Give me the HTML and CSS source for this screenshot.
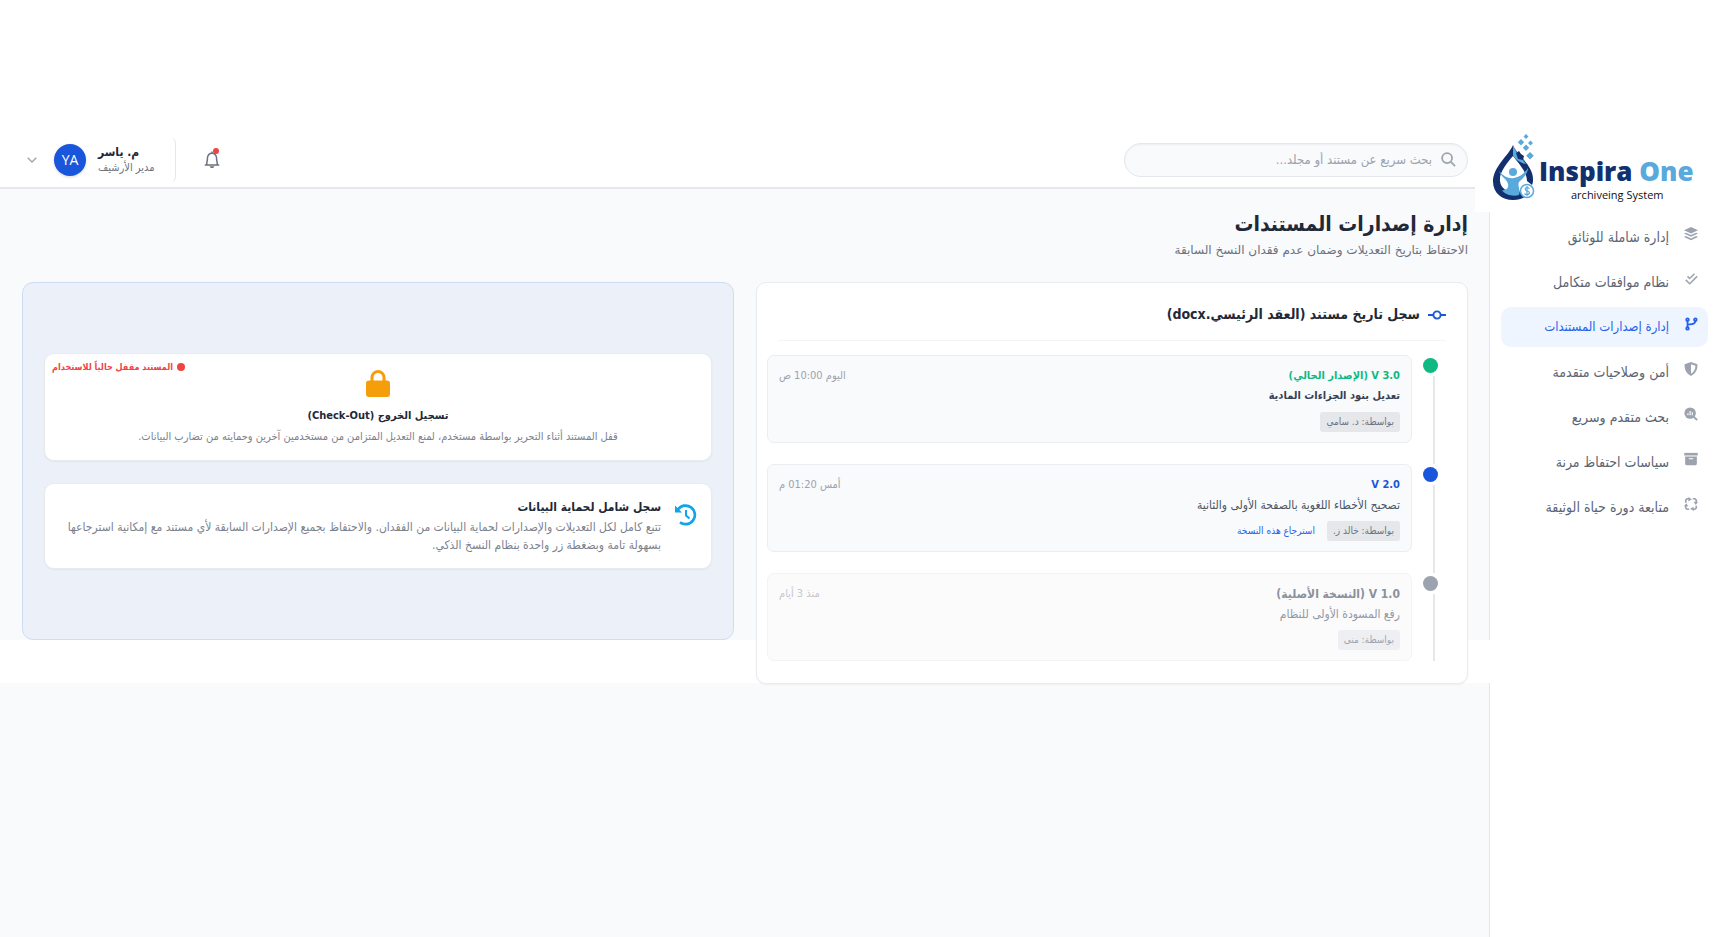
FILE: index.html
```html
<!DOCTYPE html>
<html lang="ar" dir="rtl">
<head>
<meta charset="utf-8">
<meta name="viewport" content="width=device-width, initial-scale=1">
<title>إدارة إصدارات المستندات</title>
<link rel="stylesheet" href="styles.css">
</head>
<body>
<div class="app">
  <aside class="sidebar">
    <div class="brand">
      <svg class="brand-mark" viewBox="0 0 43 68" aria-hidden="true">
        <path d="M21 11C17 21 1 33 1 47.500C1 59 10 66 21 66C27 66 32 64 35 61L30 57C20 60 9 57 8 47C7 39 14 30 21 22Z" fill="#12306e"/>
        <path d="M21 11C24 20 41 31 41 45C41 47 41 49 40 51L35 47C35 38 27 30 21 22Z" fill="#12306e"/>
        <path d="M21 12C25 19 30 24 34 30C27 29 23 24 21 22Z" fill="#5aa9dc"/>
        <path d="M24 19l3-2 2 3 3 2-1 4-5-1z" fill="#12306e"/>
        <circle cx="21" cy="38" r="4" fill="#5aa9dc"/>
        <path d="M7 37C12 43 17 45 22 44C28 43 33 39 36 34C36 40 30 45 27 48C25 52 29 56 27 61C20 63 12 60 10 56C14 57 17 54 16 50C15 45 9 43 7 37Z" fill="#5aa9dc"/>
        <circle cx="35" cy="57" r="6.500" fill="#fff" stroke="#5aa9dc" stroke-width="1.500"/>
        <path d="M37.500 54.500C35 52.500 32.500 54 33.500 56C34.500 57.500 37.500 57 37.500 59C37 61 34 61 32.500 59.500M35 52v10" fill="none" stroke="#5aa9dc" stroke-width="1.200"/>
        <path d="M34 0l2.500 2.500L34 5l-2.500-2.500zM29 5l3.200 3.200-3.200 3.200-3.200-3.200zM38.500 6.500l2.500 2.500-2.500 2.500L36 9zM34 10.500l3.200 3.200-3.200 3.200-3.200-3.200zM38 18l3.800 3.800L38 25.600l-3.800-3.800z" fill="#5aa9dc"/>
      </svg>
      <div class="brand-text" dir="ltr">
        <div class="brand-name">Inspira <span>One</span></div>
        <div class="brand-sub">archiveing System</div>
      </div>
    </div>
    <nav class="nav">
      <a class="nav-item" href="#"><svg viewBox="0 0 16 16"><path d="M8 0l8 3.700-8 3.700-8-3.700zM2.200 6.500L8 9.200l5.800-2.700L16 7.500l-8 3.700-8-3.700zM2.200 10.300L8 13l5.800-2.700 2.200 1L8 15 0 11.300z" fill="currentColor"/></svg><span>إدارة شاملة للوثائق</span></a>
      <a class="nav-item" href="#"><svg viewBox="0 0 16 16"><path d="M4 5l2.500 2.500L12 2M2 9l4.500 4.500L15 5" fill="none" stroke="currentColor" stroke-width="1.700"/></svg><span>نظام موافقات متكامل</span></a>
      <a class="nav-item active" href="#" aria-current="page"><svg viewBox="0 0 16 16"><g fill="none" stroke="currentColor" stroke-width="2"><circle cx="4" cy="3" r="1.500"/><circle cx="4" cy="13" r="1.500"/><circle cx="13" cy="3" r="1.500"/><path d="M4 4.500v7M13 4.500C13 8.500 9 8 4 8.500"/></g></svg><span>إدارة إصدارات المستندات</span></a>
      <a class="nav-item" href="#"><svg viewBox="0 0 16 16"><path fill-rule="evenodd" d="M8 0l7.300 2.700c.4 5.600-1.600 10.400-7.300 13.200C2.300 13.100.3 8.300.7 2.700zM8 2.500v10.800c3.600-2 5-5 5-9z" fill="currentColor"/></svg><span>أمن وصلاحيات متقدمة</span></a>
      <a class="nav-item" href="#"><svg viewBox="0 0 16 16"><path d="M11 11l4 4" stroke="currentColor" stroke-width="2.200"/><circle cx="7" cy="7" r="6.500" fill="currentColor"/><path d="M4.500 7v2.500M7 4.500v5M9.500 6v3.500" stroke="#fff" stroke-width="1.300"/></svg><span>بحث متقدم وسريع</span></a>
      <a class="nav-item" href="#"><svg viewBox="0 0 16 16"><path d="M.3 1h15.400v3H.3z" fill="currentColor"/><path fill-rule="evenodd" d="M1.300 5h13.400v8.500a1.500 1.500 0 0 1-1.500 1.500H2.800a1.500 1.500 0 0 1-1.500-1.500zM5.500 7v1.200h5V7z" fill="currentColor"/></svg><span>سياسات احتفاظ مرنة</span></a>
      <a class="nav-item" href="#"><svg viewBox="0 0 16 16"><g fill="none" stroke="currentColor" stroke-width="1.900"><path d="M2 6.500V3.500L3.500 2H6M10 2h2.500L14 3.500V6.500M14 10v2.500L12.500 14H10M6 14H3.500L2 12.500V10"/></g><path d="M5 0l4 2.500L5 5zM16 5.500L13.500 9 11 5.500zM11 11v5l-4-2.500zM0 10.500L2.500 7 5 10.500z" fill="currentColor"/></svg><span>متابعة دورة حياة الوثيقة</span></a>
    </nav>
  </aside>

  <div class="page">
    <header class="topbar">
      <label class="search">
        <svg viewBox="0 0 16 16" aria-hidden="true"><circle cx="6.500" cy="6.500" r="5.300" fill="none" stroke="currentColor" stroke-width="1.900"/><path d="M10.500 10.500L15 15" stroke="currentColor" stroke-width="1.900"/></svg>
        <input type="search" placeholder="بحث سريع عن مستند أو مجلد..." aria-label="بحث سريع">
      </label>
      <div class="tools">
        <button class="bell" type="button" aria-label="الإشعارات">
          <svg viewBox="0 0 16 18" aria-hidden="true"><path d="M.8 14h14.400M2.800 14V11.500C3.500 10 3.300 8.500 3.500 6.500C4 3.500 6 2.200 8 2.200s4 1.300 4.500 4.300C12.700 8.500 12.500 10 13.200 11.500V14" fill="none" stroke="currentColor" stroke-width="1.500"/><path d="M8 .5v2" stroke="currentColor" stroke-width="1.500"/><path d="M5.500 15.200h5L9.200 17H6.800z" fill="currentColor"/></svg>
          <span class="bell-dot"></span>
        </button>
        <button class="user" type="button">
          <span class="user-text"><span class="user-name">م. ياسر</span><span class="user-role">مدير الأرشيف</span></span>
          <span class="avatar">YA</span>
          <svg class="chevron" viewBox="0 0 10 6" aria-hidden="true"><path d="M.7.7L5 5 9.300.7" fill="none" stroke="currentColor" stroke-width="1.300"/></svg>
        </button>
      </div>
    </header>

    <main class="content">
      <h1 class="title">إدارة إصدارات المستندات</h1>
      <p class="subtitle">الاحتفاظ بتاريخ التعديلات وضمان عدم فقدان النسخ السابقة</p>

      <div class="panels">
        <section class="card history">
          <h2 class="card-title"><svg viewBox="0 0 18 10" aria-hidden="true"><path d="M0 5h5M13 5h5" stroke="currentColor" stroke-width="1.800"/><circle cx="9" cy="5" r="3.600" fill="none" stroke="currentColor" stroke-width="1.900"/></svg><span>سجل تاريخ مستند (العقد الرئيسي.docx)</span></h2>
          <ol class="timeline">
            <li class="entry current">
              <article class="version">
                <div class="version-head"><h3>V 3.0 (الإصدار الحالي)</h3><time>اليوم 10:00 ص</time></div>
                <p>تعديل بنود الجزاءات المادية</p>
                <div class="meta"><span class="tag">بواسطة: د. سامي</span></div>
              </article>
            </li>
            <li class="entry previous">
              <article class="version">
                <div class="version-head"><h3>V 2.0</h3><time>أمس 01:20 م</time></div>
                <p>تصحيح الأخطاء اللغوية بالصفحة الأولى والثانية</p>
                <div class="meta"><span class="tag">بواسطة: خالد ز.</span><button class="restore" type="button">استرجاع هذه النسخة</button></div>
              </article>
            </li>
            <li class="entry original">
              <article class="version">
                <div class="version-head"><h3>V 1.0 (النسخة الأصلية)</h3><time>منذ 3 أيام</time></div>
                <p>رفع المسودة الأولى للنظام</p>
                <div class="meta"><span class="tag">بواسطة: منى</span></div>
              </article>
            </li>
          </ol>
        </section>

        <section class="features">
          <article class="card checkout">
            <span class="status"><i></i>المستند مقفل حالياً للاستخدام</span>
            <svg class="lock" viewBox="0 0 24 27" aria-hidden="true"><path d="M6 12V7.500a6 6 0 0 1 12 0V12" fill="none" stroke="currentColor" stroke-width="3"/><rect y="10.500" width="24" height="16.500" rx="3" fill="currentColor"/></svg>
            <h3>تسجيل الخروج (Check-Out)</h3>
            <p>قفل المستند أثناء التحرير بواسطة مستخدم، لمنع التعديل المتزامن من مستخدمين آخرين وحمايته من تضارب البيانات.</p>
          </article>
          <article class="card log">
            <svg class="clock" viewBox="0 0 22 22" aria-hidden="true"><path d="M3 5.500A9.300 9.300 0 1 1 5 18.300" fill="none" stroke="currentColor" stroke-width="2.700"/><path d="M0 1.500V8.500h7z" fill="currentColor"/><path d="M11 6v5.500l3.500 3" fill="none" stroke="currentColor" stroke-width="2"/></svg>
            <div class="log-text">
              <h3>سجل شامل لحماية البيانات</h3>
              <p>تتبع كامل لكل التعديلات والإصدارات لحماية البيانات من الفقدان. والاحتفاظ بجميع الإصدارات السابقة لأي مستند مع إمكانية استرجاعها بسهولة تامة وبضغطة زر واحدة بنظام النسخ الذكي.</p>
            </div>
          </article>
        </section>
      </div>
    </main>
  </div>
</div>
</body>
</html>
```
FILE: styles.css
```css
* { box-sizing: border-box; margin: 0; padding: 0; }

body {
  background: #fff;
  color: #1f2937;
  font-family: "DejaVu Sans Condensed", "DejaVu Sans", sans-serif;
  font-size: 11px;
  line-height: 18px;
}

button { border: 0; background: none; font: inherit; color: inherit; cursor: pointer; }

.app {
  display: grid;
  grid-template-columns: 230px minmax(0, 1fr);
  min-height: 100vh;
  padding-top: 130px;
}

/* Sidebar */
.sidebar { border-left: 1px solid #e5e7eb; }

.brand {
  position: relative;
  z-index: 2;
  display: flex;
  flex-direction: row-reverse;
  gap: 4px;
  width: 230px;
  height: 82px;
  margin-right: 14px;
  padding: 4px 14px 0 17px;
  background: #fff;
}
.brand-mark { flex: none; width: 43px; height: 68px; }
.brand-text { flex: 1; padding-top: 20px; white-space: nowrap; }
.brand-name { color: #12306e; font: 800 26px/34px "Open Sans", sans-serif; }
.brand-name span { color: #5aa9dc; }
.brand-sub { padding-left: 32px; color: #111; font: 11px/14px "Open Sans", sans-serif; }

.nav { display: grid; gap: 5px; padding: 5px 11px; }
.nav-item {
  display: flex;
  align-items: center;
  gap: 15px;
  height: 40px;
  padding: 0 10px;
  border-radius: 10px;
  color: #5b6472;
  font-size: 14px;
  text-decoration: none;
  white-space: nowrap;
}
.nav-item svg { flex: none; width: 14px; height: 14px; margin-bottom: 6px; color: #9ca3af; }
.nav-item.active { background: #eff5ff; color: #2563eb; font-size: 13px; }
.nav-item.active svg { color: #2563eb; }

/* Top bar */
.page { display: flex; flex-direction: column; }
.topbar {
  display: flex;
  align-items: center;
  justify-content: space-between;
  height: 59px;
  padding: 2px 21px 0 27px;
  border-bottom: 2px solid #e5e7eb;
}
.search {
  display: flex;
  align-items: center;
  gap: 9px;
  width: 344px;
  height: 34px;
  padding: 0 11px;
  border: 1px solid #e5e7eb;
  border-radius: 17px;
  background: #f9fafb;
  box-shadow: inset 0 1px 2px #0000000d;
  color: #9ca3af;
}
.search svg { flex: none; width: 15px; height: 15px; }
.search input { flex: 1; border: 0; outline: 0; background: none; font: inherit; font-size: 13px; }
.search input::placeholder { color: #9ca3af; opacity: 1; }

.tools { display: flex; align-items: center; gap: 28px; }
.bell { position: relative; width: 16px; height: 18px; color: #6b7280; }
.bell svg { display: block; width: 16px; height: 18px; }
.bell-dot { position: absolute; top: -3px; right: 1px; width: 6px; height: 6px; border-radius: 50%; background: #ef4444; }
.user {
  display: flex;
  align-items: center;
  height: 46px;
  padding-right: 20px;
  border-right: 1px solid #e5e7eb;
  border-radius: 6px;
}
.user-text { display: grid; line-height: 16px; text-align: left; white-space: nowrap; }
.user-name { font-size: 12px; font-weight: 700; }
.user-role { color: #6b7280; font-size: 11px; }
.avatar {
  width: 32px;
  height: 32px;
  margin: 0 12px 0 17px;
  border-radius: 50%;
  background: #1a56db;
  box-shadow: 0 1px 3px #0000002a;
  color: #fff;
  font: 14px/32px "Open Sans", sans-serif;
}
.chevron { width: 10px; height: 6px; color: #9ca3af; }

/* Content */
.content { flex: 1; padding: 19px 21px 19px 22px; background: #f9fafc; }
.title { font-size: 21px; line-height: 32px; white-space: nowrap; }
.subtitle { color: #6b7280; font-family: "DejaVu Sans", sans-serif; font-size: 12px; line-height: 20px; }

.panels {
  position: relative;
  display: grid;
  grid-template-columns: repeat(2, minmax(0, 1fr));
  gap: 22px;
  margin-top: 22px;
}
.panels::before {
  content: "";
  position: absolute;
  right: -22px;
  bottom: 1px;
  left: -22px;
  height: 43px;
  background: #fff;
}
.card {
  border: 1px solid #e9ebef;
  border-radius: 10px;
  background: #fff;
  box-shadow: 0 1px 2px #0000000d;
}
.history { position: relative; padding: 20px 10px 22px; }
.card-title {
  display: flex;
  align-items: center;
  gap: 8px;
  margin: 0 11px 14px;
  padding-bottom: 14px;
  border-bottom: 1px solid #f3f4f6;
  font-size: 14px;
  line-height: 23px;
}
.card-title svg { width: 18px; height: 10px; color: #1a56db; }

.timeline { display: grid; gap: 21px; list-style: none; }
.entry { position: relative; padding-right: 45px; }
.entry::before {
  content: "";
  position: absolute;
  top: 21px;
  right: 22px;
  bottom: -21px;
  width: 2px;
  background: #e5e7eb;
}
.entry:last-child::before { bottom: 0; }
.entry::after {
  content: "";
  position: absolute;
  top: 3px;
  right: 19px;
  width: 15px;
  height: 15px;
  border-radius: 50%;
  box-shadow: 0 0 0 3px #fff;
}
.current::after { background: #10b981; }
.previous::after { background: #1a56db; }
.original::after { background: #9ca3af; }

.version {
  display: grid;
  padding: 10px 11px;
  border: 1px solid #ebedf1;
  border-radius: 7px;
  background: #f9fafc;
}
.version-head { display: flex; align-items: center; justify-content: space-between; line-height: 20px; }
.version h3 { font-size: 12px; }
.version time { color: #9ca3af; font-size: 11px; }
.version p { color: #4b5563; font-size: 12px; line-height: 20px; }
.meta { display: flex; align-items: center; gap: 12px; margin-top: 6px; font-size: 10px; line-height: 20px; }
.tag { padding: 0 6px; border-radius: 3px; background: #e5e7eb; color: #6b7280; }
.restore { color: #2563eb; }
.current h3 { color: #10b981; font-size: 11px; }
.current p { color: #374151; font-size: 11px; font-weight: 700; }
.previous h3 { color: #1a56db; font-size: 11px; }
.original .version { background: #fbfbfc; border-color: #f3f4f6; }
.original h3 { color: #8a919c; }
.original p { color: #9299a4; }
.original time { color: #c4c8cf; }
.original .tag { background: #eeeff2; color: #9ca3af; }

.features {
  position: relative;
  display: flex;
  flex-direction: column;
  justify-content: center;
  gap: 22px;
  margin-bottom: 44px;
  padding: 0 21px;
  border: 1px solid #cfdcf6;
  border-radius: 11px;
  background: #ecf0f9;
}
.features h3 { font-size: 12px; line-height: 20px; }
.features p { color: #7b828e; font-size: 11px; line-height: 18px; }
.checkout { position: relative; padding: 16px 14px 14px; text-align: center; }
.lock { display: block; width: 24px; height: 27px; margin: 0 auto 9px; color: #f59e0b; }
.checkout h3 { font-size: 11px; }
.checkout p { white-space: nowrap; margin-top: 2px; }
.status {
  position: absolute;
  top: 4px;
  left: 7px;
  display: flex;
  align-items: center;
  gap: 4px;
  color: #ef4444;
  font-size: 9px;
  font-weight: 700;
}
.status i { width: 8px; height: 8px; border-radius: 50%; background: currentColor; }
.log { display: flex; gap: 14px; padding: 13px 14px 14px; }
.log p { margin-top: 1px; font-size: 12px; }
.clock { flex: none; width: 22px; height: 22px; margin-top: 7px; color: #0ea5e9; }
.log-text { flex: 1; }
```
